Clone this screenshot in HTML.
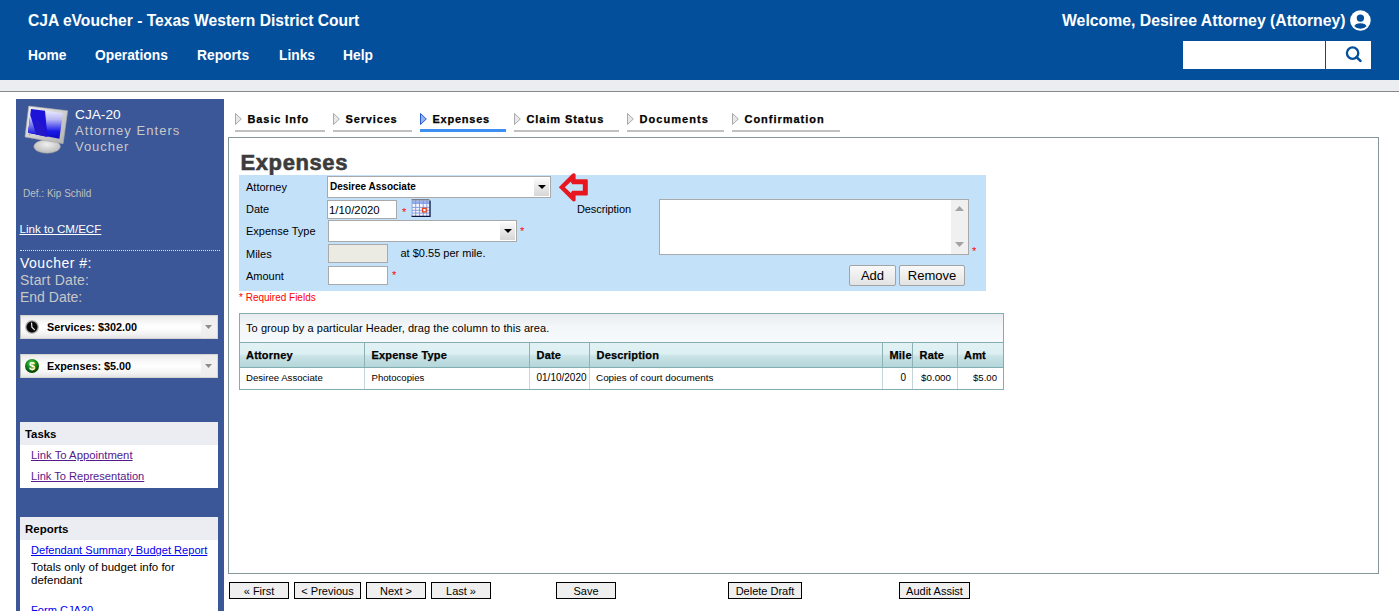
<!DOCTYPE html>
<html><head><meta charset="utf-8"><style>
html,body{margin:0;padding:0;width:1399px;height:611px;overflow:hidden;background:#fff;font-family:"Liberation Sans",sans-serif}
.t{position:absolute;line-height:1;white-space:nowrap}
.k{-webkit-text-stroke:0.25px #000}
.b{position:absolute}
.btn{position:absolute;box-sizing:border-box;border:1px solid #000;background:#efefef;font-size:11px;line-height:16px;text-align:center;color:#000;white-space:nowrap}
.btn2{position:absolute;box-sizing:border-box;border:1px solid #a3a3a3;border-radius:2px;background:linear-gradient(#f9f9f9,#e3e3e3);text-align:center;color:#000;white-space:nowrap}
</style></head><body>
<div class="b" style="left:0px;top:0px;width:1399px;height:80px;background:#034f9c"></div>
<div class="b" style="left:0px;top:80px;width:1399px;height:11px;background:#ecedf1"></div>
<div class="b" style="left:0px;top:91px;width:1399px;height:1px;background:#888"></div>
<div class="t " style="left:28px;top:13.09px;font-size:15.6px;font-weight:bold;color:#fff;">CJA eVoucher - Texas Western District Court</div>
<div class="t " style="left:28px;top:48.62px;font-size:13.8px;font-weight:bold;color:#fff;">Home</div>
<div class="t " style="left:95px;top:48.62px;font-size:13.8px;font-weight:bold;color:#fff;">Operations</div>
<div class="t " style="left:197px;top:48.62px;font-size:13.8px;font-weight:bold;color:#fff;">Reports</div>
<div class="t " style="left:279px;top:48.62px;font-size:13.8px;font-weight:bold;color:#fff;">Links</div>
<div class="t " style="left:343px;top:48.62px;font-size:13.8px;font-weight:bold;color:#fff;">Help</div>
<div class="t " style="left:1062px;top:13.43px;font-size:15.8px;font-weight:bold;color:#fff;">Welcome, Desiree Attorney (Attorney)</div>
<svg class="b" style="left:1350px;top:10px" width="21" height="21" viewBox="0 0 21 21"><circle cx="10.4" cy="10.5" r="10.3" fill="#fff"/><circle cx="10.4" cy="8.1" r="3.7" fill="#034f9c"/><path d="M4.3 16.3 Q5.3 13.2 10.4 13.2 Q15.5 13.2 16.5 16.3 Q14.6 18.7 10.4 18.7 Q6.2 18.7 4.3 16.3Z" fill="#034f9c"/></svg>
<div class="b" style="left:1183px;top:41px;width:142px;height:28px;background:#fff"></div>
<div class="b" style="left:1326px;top:41px;width:45px;height:28px;background:#fff"></div>
<svg class="b" style="left:1344px;top:46px" width="18" height="18" viewBox="0 0 18 18"><circle cx="8.6" cy="7.1" r="5.7" fill="none" stroke="#034f9c" stroke-width="2.3"/><path d="M12.6 11.1 L16.4 14.9" stroke="#034f9c" stroke-width="2.6" stroke-linecap="round"/></svg>
<div class="b" style="left:16px;top:99px;width:208px;height:512px;background:#3b5797"></div>
<svg class="b" style="left:20px;top:102px" width="52" height="56" viewBox="0 0 52 56">
<defs>
<linearGradient id="rt" x1="0" y1="0" x2="0" y2="1"><stop offset="0" stop-color="#f4f4ff"/><stop offset="0.35" stop-color="#b8b8f4"/><stop offset="0.75" stop-color="#1a1ae8"/><stop offset="1" stop-color="#0c0cc0"/></linearGradient>
<linearGradient id="lt" x1="0" y1="0" x2="0" y2="1"><stop offset="0" stop-color="#e0e0ff"/><stop offset="1" stop-color="#2020e0"/></linearGradient>
<linearGradient id="bz" x1="0" y1="0" x2="1" y2="1"><stop offset="0" stop-color="#f0f0f0"/><stop offset="1" stop-color="#b0b0b0"/></linearGradient>
<radialGradient id="st" cx="0.5" cy="0.35" r="0.65"><stop offset="0" stop-color="#f0f0f0"/><stop offset="1" stop-color="#b8b8b8"/></radialGradient></defs>
<ellipse cx="27.1" cy="44.5" rx="13.3" ry="6.8" fill="url(#st)" stroke="#9a9a9a" stroke-width="0.5"/>
<path d="M8.7 4.1 L47.7 8.7 L43.1 41.7 L5 34.9Z" fill="url(#bz)" stroke="#a8a8a8" stroke-width="0.6"/>
<path d="M11 6.9 L42.9 11 L39.4 36.7 L8.1 30.7Z" fill="url(#rt)"/>
<path d="M11 6.9 L25 8.7 L27.5 34.9 L8.1 30.7Z" fill="#1c12d8"/>
<path d="M15 15 L24 25 L27 34.8 L16 32.6Z" fill="#2a1ac0" opacity="0.6"/>
<path d="M10.3 13 L16 31.9 L8.1 30.7Z" fill="url(#lt)"/>
<circle cx="9.5" cy="32.7" r="0.6" fill="#3c3"/>
</svg>
<div class="t " style="left:75px;top:108.20px;font-size:13.7px;font-weight:normal;color:#fff;">CJA-20</div>
<div class="t " style="left:75px;top:124.00px;font-size:13px;font-weight:normal;color:#c8c8c8;letter-spacing:1.05px">Attorney Enters</div>
<div class="t " style="left:75px;top:140.00px;font-size:13px;font-weight:normal;color:#c8c8c8;letter-spacing:0.95px">Voucher</div>
<div class="t " style="left:23px;top:188.53px;font-size:10px;font-weight:normal;color:#c0c0c0;">Def.: Kip Schild</div>
<div class="t " style="left:19.5px;top:223.18px;font-size:11.6px;font-weight:normal;color:#fff;text-decoration:underline">Link to CM/ECF</div>
<div class="b" style="left:20px;top:250px;width:200px;height:1px;border-top:1px dotted #e0e0e0;height:0"></div>
<div class="t " style="left:20px;top:256.15px;font-size:14px;font-weight:normal;color:#fff;letter-spacing:0.5px">Voucher #:</div>
<div class="t " style="left:20px;top:273.15px;font-size:14px;font-weight:normal;color:#c8c8c8;letter-spacing:0.2px">Start Date:</div>
<div class="t " style="left:20px;top:290.15px;font-size:14px;font-weight:normal;color:#c8c8c8;">End Date:</div>
<div class="b" style="left:20px;top:315px;width:198px;height:24px;background:linear-gradient(#e9e9e9,#f6f6f6 25%,#ffffff 50%,#f4f4f4 80%,#e4e4e4);border:1px solid #d4d4d0;border-left-color:#b8b8b8;box-sizing:border-box"></div>
<div class="b" style="left:201px;top:316px;width:16px;height:22px;background:linear-gradient(#ececec,#f2f2f2 50%,#ececec)"></div>
<svg class="b" style="left:25px;top:320px" width="14" height="14" viewBox="0 0 14 14"><defs><radialGradient id="c315" cx="0.5" cy="0.5" r="0.5"><stop offset="0.75" stop-color="#444"/><stop offset="0.85" stop-color="#aaa"/><stop offset="1" stop-color="#c8c8c8"/></radialGradient></defs><circle cx="7" cy="7" r="7" fill="url(#c315)"/><circle cx="7" cy="7" r="5.2" fill="#080808"/><path d="M6.6 3.2 L6.9 7.2 L9.4 9.6" stroke="#f0f0f0" stroke-width="1.2" fill="none" stroke-linecap="round"/></svg>
<div class="t " style="left:47px;top:321.86px;font-size:10.8px;font-weight:bold;color:#000;">Services: $302.00</div>
<svg class="b" style="left:205px;top:325px" width="7" height="4" viewBox="0 0 7 4"><path d="M0 0 H7 L3.5 4Z" fill="#8c8c8c"/></svg>
<div class="b" style="left:20px;top:354px;width:198px;height:24px;background:linear-gradient(#e9e9e9,#f6f6f6 25%,#ffffff 50%,#f4f4f4 80%,#e4e4e4);border:1px solid #d4d4d0;border-left-color:#b8b8b8;box-sizing:border-box"></div>
<div class="b" style="left:201px;top:355px;width:16px;height:22px;background:linear-gradient(#ececec,#f2f2f2 50%,#ececec)"></div>
<svg class="b" style="left:25px;top:359px" width="14" height="14" viewBox="0 0 14 14"><defs><radialGradient id="g354" cx="0.45" cy="0.3" r="0.7"><stop offset="0" stop-color="#5ad05a"/><stop offset="0.5" stop-color="#138a13"/><stop offset="1" stop-color="#003a00"/></radialGradient></defs><circle cx="7" cy="7" r="7" fill="url(#g354)"/><text x="7" y="11.3" font-size="11" font-weight="bold" text-anchor="middle" fill="#fff" font-family="Liberation Sans">$</text></svg>
<div class="t " style="left:47px;top:360.86px;font-size:10.8px;font-weight:bold;color:#000;">Expenses: $5.00</div>
<svg class="b" style="left:205px;top:364px" width="7" height="4" viewBox="0 0 7 4"><path d="M0 0 H7 L3.5 4Z" fill="#8c8c8c"/></svg>
<div class="b" style="left:20px;top:422px;width:198px;height:66px;background:#fff"></div>
<div class="b" style="left:20px;top:422px;width:198px;height:23px;background:#ecedf2"></div>
<div class="t " style="left:25px;top:429.15px;font-size:11.4px;font-weight:bold;color:#000;">Tasks</div>
<div class="t " style="left:31px;top:449.73px;font-size:11.3px;font-weight:normal;color:#551a8b;text-decoration:underline">Link To Appointment</div>
<div class="t " style="left:31px;top:470.70px;font-size:11.1px;font-weight:normal;color:#551a8b;text-decoration:underline">Link To Representation</div>
<div class="b" style="left:20px;top:517px;width:198px;height:94px;background:#fff"></div>
<div class="b" style="left:20px;top:517px;width:198px;height:23px;background:#ecedf2"></div>
<div class="t " style="left:25px;top:524.07px;font-size:11.5px;font-weight:bold;color:#000;">Reports</div>
<div class="t " style="left:31px;top:545.10px;font-size:11.1px;font-weight:normal;color:#0000ee;text-decoration:underline">Defendant Summary Budget Report</div>
<div class="t " style="left:31px;top:562.17px;font-size:11.5px;font-weight:normal;color:#000;">Totals only of budget info for</div>
<div class="t " style="left:31px;top:575.17px;font-size:11.5px;font-weight:normal;color:#000;">defendant</div>
<div class="t " style="left:31px;top:604.60px;font-size:11.1px;font-weight:normal;color:#0000ee;text-decoration:underline">Form CJA20</div>
<div class="b" style="left:235px;top:130px;width:90px;height:2px;background:#c0c0c0"></div>
<svg class="b" style="left:235px;top:113px" width="7" height="12" viewBox="0 0 7 12"><path d="M0.5 0.5 L6.3 6 L0.5 11.5Z" fill="#e8e8e8" stroke="#a8a8a8" stroke-width="1"/></svg>
<div class="t k" style="left:247.5px;top:113.69px;font-size:11px;font-weight:bold;color:#000;letter-spacing:0.9px">Basic Info</div>
<div class="b" style="left:333px;top:130px;width:79px;height:2px;background:#c0c0c0"></div>
<svg class="b" style="left:333px;top:113px" width="7" height="12" viewBox="0 0 7 12"><path d="M0.5 0.5 L6.3 6 L0.5 11.5Z" fill="#e8e8e8" stroke="#a8a8a8" stroke-width="1"/></svg>
<div class="t k" style="left:345.5px;top:113.69px;font-size:11px;font-weight:bold;color:#000;letter-spacing:0.85px">Services</div>
<div class="b" style="left:420px;top:129px;width:86px;height:3px;background:#3d8ff2"></div>
<svg class="b" style="left:420px;top:113px" width="7" height="12" viewBox="0 0 7 12"><path d="M0.5 0.5 L6.3 6 L0.5 11.5Z" fill="#8fb4f0" stroke="#2a5ad0" stroke-width="1"/></svg>
<div class="t k" style="left:432.5px;top:113.69px;font-size:11px;font-weight:bold;color:#000;letter-spacing:0.75px">Expenses</div>
<div class="b" style="left:514px;top:130px;width:104.5px;height:2px;background:#c0c0c0"></div>
<svg class="b" style="left:514px;top:113px" width="7" height="12" viewBox="0 0 7 12"><path d="M0.5 0.5 L6.3 6 L0.5 11.5Z" fill="#e8e8e8" stroke="#a8a8a8" stroke-width="1"/></svg>
<div class="t k" style="left:526.5px;top:113.69px;font-size:11px;font-weight:bold;color:#000;letter-spacing:0.92px">Claim Status</div>
<div class="b" style="left:627px;top:130px;width:97px;height:2px;background:#c0c0c0"></div>
<svg class="b" style="left:627px;top:113px" width="7" height="12" viewBox="0 0 7 12"><path d="M0.5 0.5 L6.3 6 L0.5 11.5Z" fill="#e8e8e8" stroke="#a8a8a8" stroke-width="1"/></svg>
<div class="t k" style="left:639.5px;top:113.69px;font-size:11px;font-weight:bold;color:#000;letter-spacing:1.05px">Documents</div>
<div class="b" style="left:732px;top:130px;width:107.5px;height:2px;background:#c0c0c0"></div>
<svg class="b" style="left:732px;top:113px" width="7" height="12" viewBox="0 0 7 12"><path d="M0.5 0.5 L6.3 6 L0.5 11.5Z" fill="#e8e8e8" stroke="#a8a8a8" stroke-width="1"/></svg>
<div class="t k" style="left:744.5px;top:113.69px;font-size:11px;font-weight:bold;color:#000;letter-spacing:0.98px">Confirmation</div>
<div class="b" style="left:228px;top:137px;width:1151px;height:437px;border:1px solid #879696;box-sizing:border-box"></div>
<div class="t " style="left:240.5px;top:151.88px;font-size:22px;font-weight:bold;color:#3c3c3c;letter-spacing:0.6px;-webkit-text-stroke:0.6px #3c3c3c">Expenses</div>
<div class="b" style="left:239px;top:175px;width:747px;height:116px;background:#c4e1fa"></div>
<div class="t " style="left:246px;top:181.69px;font-size:11px;font-weight:normal;color:#000;">Attorney</div>
<div class="t " style="left:246px;top:203.69px;font-size:11px;font-weight:normal;color:#000;">Date</div>
<div class="t " style="left:246px;top:225.69px;font-size:11px;font-weight:normal;color:#000;">Expense Type</div>
<div class="t " style="left:246px;top:248.69px;font-size:11px;font-weight:normal;color:#000;">Miles</div>
<div class="t " style="left:246px;top:270.69px;font-size:11px;font-weight:normal;color:#000;">Amount</div>
<div class="b" style="left:327px;top:176px;width:224px;height:22px;background:#fff;border:1px solid #a9a9a9;box-sizing:border-box"></div>
<div class="b" style="left:534px;top:178px;width:15px;height:18px;background:linear-gradient(#fbfbfb,#d6d6d6)"></div>
<svg class="b" style="left:538px;top:185px" width="8" height="4" viewBox="0 0 8 4"><path d="M0 0 H8 L4 4Z" fill="#000"/></svg>
<div class="t " style="left:330px;top:181.73px;font-size:10px;font-weight:bold;color:#000;">Desiree Associate</div>
<svg class="b" style="left:552px;top:168px" width="44" height="38" viewBox="0 0 44 38"><path fill-rule="evenodd" fill="#e8161f" d="M6.8 19.3 L20.3 5.8 Q22 4.4 23.6 6.2 L23.6 11.2 L34.8 11.2 Q35.8 11.2 35.8 12.2 L35.8 26.4 Q35.8 27.4 34.8 27.4 L23.6 27.4 L23.6 32.6 Q22 34.4 20.3 32.8 Z M12.8 19.3 L18.8 13.8 L20.2 16.2 L30.8 16.2 L30.8 22.7 L20.2 22.7 L18.8 25Z"/></svg>
<div class="b" style="left:327px;top:200px;width:70px;height:19px;background:#fff;border:1px solid #a9a9a9;box-sizing:border-box"></div>
<div class="t " style="left:329px;top:204.55px;font-size:11.4px;font-weight:normal;color:#000;">1/10/2020</div>
<div class="t " style="left:402px;top:206.69px;font-size:11px;font-weight:normal;color:#ff0000;">*</div>
<svg class="b" style="left:411px;top:199px" width="20" height="19" viewBox="0 0 20 19">
<rect x="0.5" y="0.5" width="18.5" height="17" fill="#f4f6ff"/>
<rect x="1" y="1.5" width="17.5" height="3" fill="#9db4ee"/>
<path d="M1 4.3 H18.5 M1 8.4 H18.5 M1 11.3 H18.5 M1 14.1 H18.5" stroke="#7b95dc" stroke-width="0.9"/>
<path d="M1 1.5 V17 M4.7 1.5 V17 M8.5 1.5 V17 M12.2 1.5 V17 M15.8 1.5 V17" stroke="#7b95dc" stroke-width="0.9"/>
<path d="M0.5 0.8 H18.5" stroke="#555" stroke-width="1"/>
<path d="M0.5 17.3 H19 V1.5" stroke="#0a1440" stroke-width="1.3" fill="none"/>
<rect x="11.6" y="9.3" width="3.6" height="3.6" fill="#fff" stroke="#e8401a" stroke-width="1.3"/>
</svg>
<div class="t " style="left:577px;top:203.69px;font-size:11px;font-weight:normal;color:#000;letter-spacing:-0.1px">Description</div>
<div class="b" style="left:328px;top:220px;width:189px;height:22px;background:#fff;border:1px solid #a9a9a9;box-sizing:border-box"></div>
<div class="b" style="left:500px;top:222px;width:15px;height:18px;background:linear-gradient(#fbfbfb,#d6d6d6)"></div>
<svg class="b" style="left:504px;top:229px" width="8" height="4" viewBox="0 0 8 4"><path d="M0 0 H8 L4 4Z" fill="#000"/></svg>
<div class="t " style="left:520px;top:225.69px;font-size:11px;font-weight:normal;color:#ff0000;">*</div>
<div class="b" style="left:328px;top:244px;width:60px;height:19px;background:#ebebe4;border:1px solid #a9a9a9;box-sizing:border-box"></div>
<div class="t " style="left:400.5px;top:248.09px;font-size:11px;font-weight:normal;color:#000;">at $0.55 per mile.</div>
<div class="b" style="left:328px;top:266px;width:60px;height:19px;background:#fff;border:1px solid #a9a9a9;box-sizing:border-box"></div>
<div class="t " style="left:392px;top:269.69px;font-size:11px;font-weight:normal;color:#ff0000;">*</div>
<div class="b" style="left:659px;top:199px;width:310px;height:56px;background:#fff;border:1px solid #a9a9a9;box-sizing:border-box"></div>
<div class="b" style="left:951px;top:200px;width:17px;height:54px;background:#f0f0f0"></div>
<svg class="b" style="left:955px;top:206px" width="9" height="5" viewBox="0 0 9 5"><path d="M0 5 H9 L4.5 0Z" fill="#a3a3a3"/></svg>
<svg class="b" style="left:955px;top:242px" width="9" height="5" viewBox="0 0 9 5"><path d="M0 0 H9 L4.5 5Z" fill="#a3a3a3"/></svg>
<div class="t " style="left:972px;top:245.69px;font-size:11px;font-weight:normal;color:#ff0000;">*</div>
<div class="btn2" style="left:849px;top:265px;width:47px;height:21px;font-size:13px;line-height:19px">Add</div>
<div class="btn2" style="left:899px;top:265px;width:66px;height:21px;font-size:13px;line-height:19px">Remove</div>
<div class="t " style="left:239px;top:292.54px;font-size:10px;font-weight:normal;color:#ff0000;">* Required Fields</div>
<div class="b" style="left:239px;top:313px;width:765px;height:77px;border:1px solid #82aeb2;box-sizing:border-box"></div>
<div class="b" style="left:240px;top:314px;width:763px;height:28px;background:linear-gradient(#e9ecee,#f4f7f9 45%,#f7fafc)"></div>
<div class="t " style="left:246px;top:322.69px;font-size:11px;font-weight:normal;color:#000;letter-spacing:0.07px">To group by a particular Header, drag the column to this area.</div>
<div class="b" style="left:240px;top:342px;width:763px;height:1px;background:#82aeb2"></div>
<div class="b" style="left:240px;top:343px;width:763px;height:24px;background:linear-gradient(#e2f2f4,#dcefF2 45%,#c9e3e6 55%,#b4d6da)"></div>
<div class="b" style="left:240px;top:367px;width:763px;height:1px;background:#82aeb2"></div>
<div class="b" style="left:364px;top:343px;width:1px;height:24px;background:#8cb2b6"></div>
<div class="b" style="left:364px;top:368px;width:1px;height:21px;background:#c4d8dc"></div>
<div class="b" style="left:529px;top:343px;width:1px;height:24px;background:#8cb2b6"></div>
<div class="b" style="left:529px;top:368px;width:1px;height:21px;background:#c4d8dc"></div>
<div class="b" style="left:589px;top:343px;width:1px;height:24px;background:#8cb2b6"></div>
<div class="b" style="left:589px;top:368px;width:1px;height:21px;background:#c4d8dc"></div>
<div class="b" style="left:882px;top:343px;width:1px;height:24px;background:#8cb2b6"></div>
<div class="b" style="left:882px;top:368px;width:1px;height:21px;background:#c4d8dc"></div>
<div class="b" style="left:912px;top:343px;width:1px;height:24px;background:#8cb2b6"></div>
<div class="b" style="left:912px;top:368px;width:1px;height:21px;background:#c4d8dc"></div>
<div class="b" style="left:957px;top:343px;width:1px;height:24px;background:#8cb2b6"></div>
<div class="b" style="left:957px;top:368px;width:1px;height:21px;background:#c4d8dc"></div>
<div class="t k" style="left:246px;top:349.69px;font-size:11px;font-weight:bold;color:#000;letter-spacing:0.2px">Attorney</div>
<div class="t k" style="left:371.5px;top:349.69px;font-size:11px;font-weight:bold;color:#000;letter-spacing:0.2px">Expense Type</div>
<div class="t k" style="left:536.5px;top:349.69px;font-size:11px;font-weight:bold;color:#000;letter-spacing:0.2px">Date</div>
<div class="t k" style="left:596.5px;top:349.69px;font-size:11px;font-weight:bold;color:#000;letter-spacing:0.2px">Description</div>
<div class="t k" style="left:889.5px;top:349.69px;font-size:11px;font-weight:bold;color:#000;letter-spacing:0.2px">Mile</div>
<div class="t k" style="left:919.5px;top:349.69px;font-size:11px;font-weight:bold;color:#000;letter-spacing:0.2px">Rate</div>
<div class="t k" style="left:964px;top:349.69px;font-size:11px;font-weight:bold;color:#000;letter-spacing:0.2px">Amt</div>
<div class="t " style="left:246px;top:372.87px;font-size:9.6px;font-weight:normal;color:#000;">Desiree Associate</div>
<div class="t " style="left:371.5px;top:372.87px;font-size:9.6px;font-weight:normal;color:#000;">Photocopies</div>
<div class="t " style="left:536.5px;top:372.54px;font-size:10px;font-weight:normal;color:#000;">01/10/2020</div>
<div class="t " style="left:596px;top:372.62px;font-size:9.9px;font-weight:normal;color:#000;">Copies of court documents</div>
<div class="t" style="left:860px;width:46px;text-align:right;top:372.54px;font-size:10px">0</div>
<div class="t" style="left:900px;width:51px;text-align:right;top:372.70px;font-size:9.8px">$0.000</div>
<div class="t" style="left:950px;width:47px;text-align:right;top:372.87px;font-size:9.6px">$5.00</div>
<div class="btn" style="left:229px;top:582px;width:60px;height:17px">« First</div>
<div class="btn" style="left:294px;top:582px;width:67px;height:17px">&lt; Previous</div>
<div class="btn" style="left:366px;top:582px;width:60px;height:17px">Next &gt;</div>
<div class="btn" style="left:431px;top:582px;width:60px;height:17px">Last »</div>
<div class="btn" style="left:556px;top:582px;width:60px;height:17px">Save</div>
<div class="btn" style="left:728px;top:582px;width:74px;height:17px">Delete Draft</div>
<div class="btn" style="left:899px;top:582px;width:71px;height:17px">Audit Assist</div>
</body></html>
